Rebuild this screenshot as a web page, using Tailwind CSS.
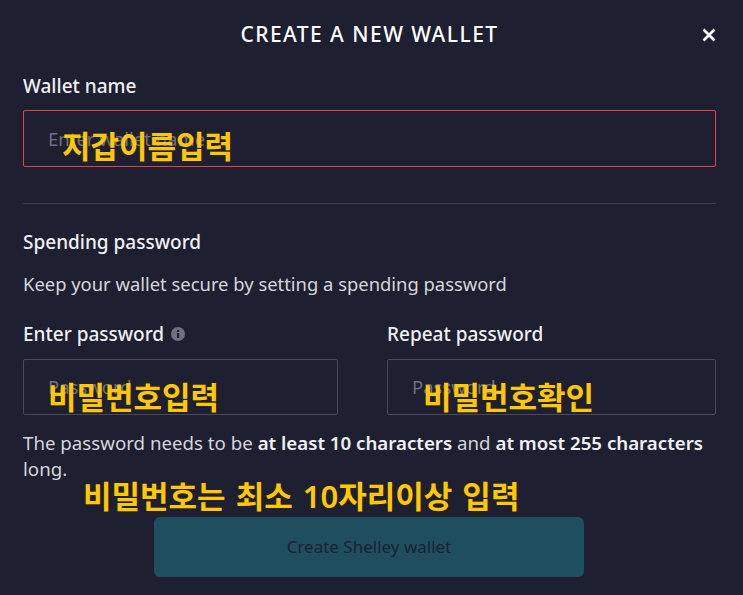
<!DOCTYPE html>
<html><head><meta charset="utf-8">
<script src="https://cdn.jsdelivr.net/npm/@tailwindcss/browser@4"></script>
</head>
<body class="m-0">
<div class="relative w-[743px] h-[595px] overflow-hidden bg-[#1e1f31] font-['Noto_Sans','Noto_Sans_CJK_KR',sans-serif] text-[#e9eaee]">
  <div class="pl-[23px] pr-[27px]">
    <div class="relative h-[74px] flex items-center justify-center">
      <h1 class="text-[21px] font-medium tracking-[1.45px] text-white leading-[24px] pb-[6px]">CREATE A NEW WALLET</h1>
      <svg class="absolute right-0 top-[28px] w-[14px] h-[14px]" viewBox="0 0 14 14" fill="none" stroke="#fff" stroke-width="2.6"><path d="M1.5 1.5 12.5 12.5M12.5 1.5 1.5 12.5"/></svg>
    </div>
    <label class="block text-[19px] font-medium leading-[24px] text-[#f0f1f4]">Wallet name</label>
    <div class="mt-[12px] h-[57px] border border-solid border-[#e2404f] rounded-[2px] pl-[24px] flex items-center text-[18.5px] text-[#6f7080]">Enter wallet name</div>
    <hr class="mt-[36px] border-0 border-t border-[#3b3c4e]">
    <h2 class="mt-[26px] text-[19px] font-medium leading-[24px] text-[#f0f1f4]">Spending password</h2>
    <p class="mt-[18px] text-[18.4px] leading-[24px] text-[#d5d6dc]">Keep your wallet secure by setting a spending password</p>
    <div class="mt-[26px] flex gap-[49px]">
      <div class="w-[315px]">
        <label class="flex items-center gap-[7px] text-[19px] font-medium leading-[24px] text-[#f0f1f4]">Enter password
          <svg class="w-[14px] h-[14px]" viewBox="0 0 14 14"><circle cx="7" cy="7" r="7" fill="#70717f"/><rect x="6" y="6" width="2.2" height="5" fill="#1e1f31"/><rect x="6" y="3" width="2.2" height="2" fill="#1e1f31"/></svg>
        </label>
        <div class="mt-[13px] h-[56px] border border-[#494a5b] rounded-[2px] pl-[24px] flex items-center text-[18.5px] text-[#6f7080]">Password</div>
      </div>
      <div class="flex-1">
        <label class="block text-[19px] font-medium leading-[24px] text-[#f0f1f4]">Repeat password</label>
        <div class="mt-[13px] h-[56px] border border-[#494a5b] rounded-[2px] pl-[24px] flex items-center text-[18.5px] text-[#6f7080]">Password</div>
      </div>
    </div>
    <p class="mt-[15px] text-[18.7px] leading-[26px] text-[#d5d6dc] w-[690px]">The password needs to be <b class="font-semibold text-[#f0f1f4]">at least 10 characters</b> and <b class="font-semibold text-[#f0f1f4]">at most 255 characters</b> long.</p>
    <div class="mt-[35px] ml-[131px] w-[430px] h-[60px] rounded-[6px] bg-[#1f4f5e] flex items-center justify-center text-[17px] text-[#1d2136]">Create Shelley wallet</div>
  </div>
  <span class="absolute left-[62px] top-[125px] text-[31px] leading-[42px] font-semibold text-[#ffc800] whitespace-nowrap">지갑이름입력</span>
  <span class="absolute left-[48px] top-[376px] text-[31px] leading-[42px] font-semibold text-[#ffc800] whitespace-nowrap">비밀번호입력</span>
  <span class="absolute left-[423px] top-[376px] text-[31px] leading-[42px] font-semibold text-[#ffc800] whitespace-nowrap">비밀번호확인</span>
  <span class="absolute left-[83px] top-[475px] text-[31px] leading-[42px] font-semibold text-[#ffc800] whitespace-nowrap [word-spacing:2px]">비밀번호는 최소 10자리이상 입력</span>
</div>
</body></html>
